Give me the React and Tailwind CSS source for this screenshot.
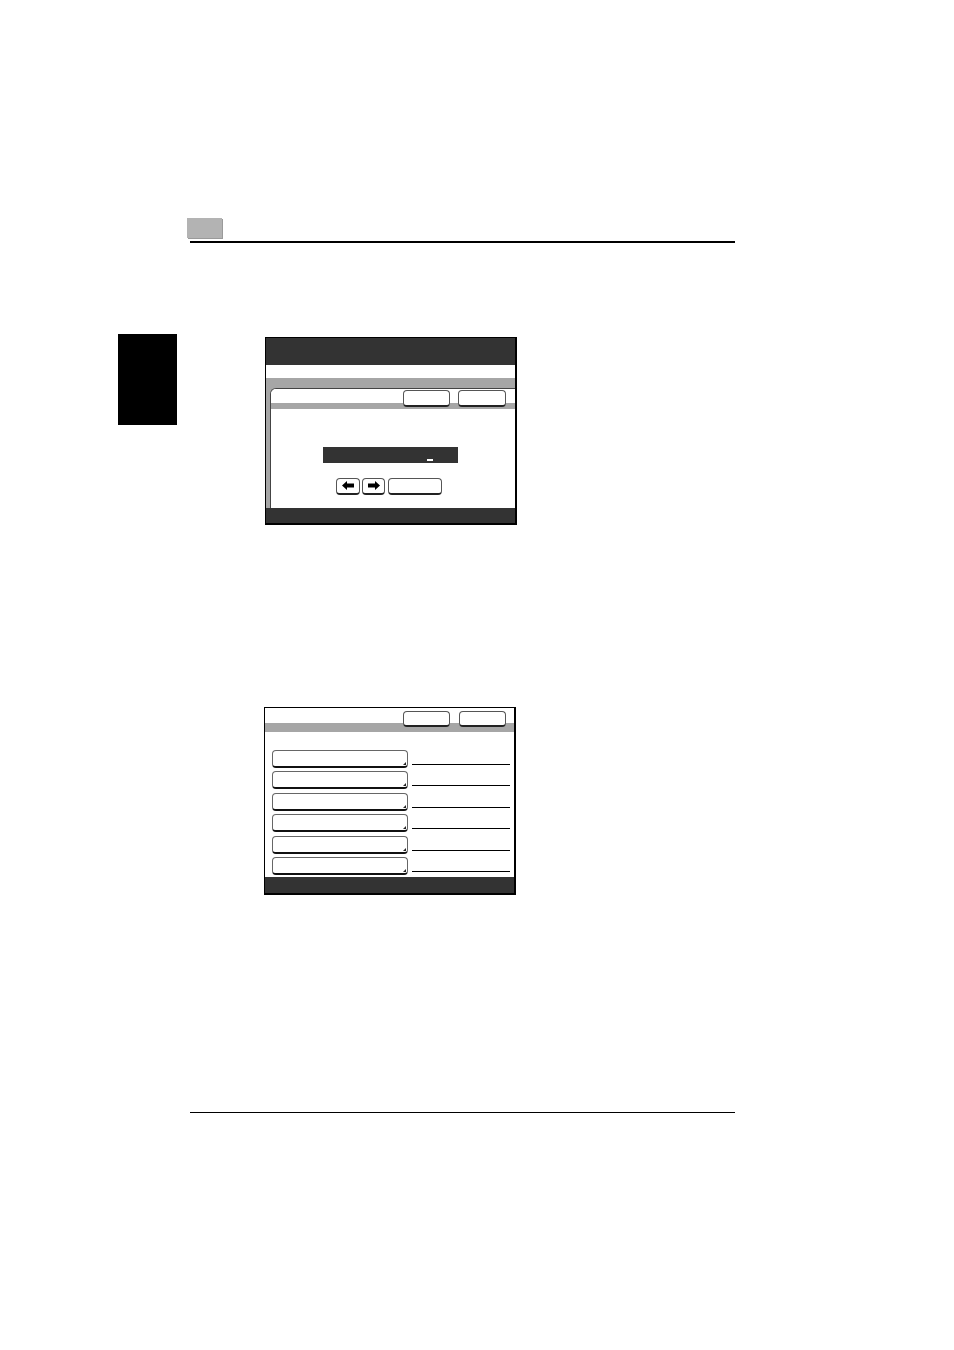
import React from "react";

// ============================================
// Small pieces
// ============================================
function KeyButton({ className = "", children }) {
  return (
    <div
      className={`flex items-center justify-center rounded-[4px] border border-[#555] border-b-2 border-b-[#222] bg-white ${className}`}
    >
      {children}
    </div>
  );
}

function ListButton() {
  return (
    <div className="relative h-[18px] w-[136px] rounded-[4px] border border-[#666] border-b-2 border-b-[#111] bg-white">
      {/* corner marker */}
      <svg className="absolute bottom-[1px] right-[1px]" width="3" height="3" viewBox="0 0 3 3">
        <path d="M3 0 L3 3 L0 3 Z" fill="#222" />
      </svg>
    </div>
  );
}

function Arrow({ dir }) {
  return (
    <svg width="12" height="9" viewBox="0 0 12 9">
      {dir === "left" ? (
        <path d="M0 4.5 L5 0 L5 2.5 L12 2.5 L12 6.5 L5 6.5 L5 9 Z" fill="#000" />
      ) : (
        <path d="M12 4.5 L7 0 L7 2.5 L0 2.5 L0 6.5 L7 6.5 L7 9 Z" fill="#000" />
      )}
    </svg>
  );
}

// ============================================
// Screen 1: text entry
// ============================================
function EntryScreen() {
  return (
    <div className="flex h-[188px] w-[252px] flex-col border-l border-t border-r-2 border-b-2 border-black bg-white">
      <div className="h-[27px] bg-[#333]" />
      <div className="h-[13px] bg-white" />
      <div className="h-[10px] bg-[#a6a6a6]" />
      <div className="flex flex-1 bg-[#a6a6a6]">
        <div className="w-[4px]" />
        <div className="flex flex-1 flex-col rounded-tl-[6px] border-l border-t border-[#444] bg-white">
          <div className="flex h-[20px] items-start justify-end gap-[8px] rounded-tl-[5px] bg-[linear-gradient(to_bottom,white_14px,#a6a6a6_14px)] pr-[9px] pt-[1px]">
            <KeyButton className="h-[17px] w-[47px]" />
            <KeyButton className="h-[17px] w-[48px]" />
          </div>
          <div className="ml-[52px] mt-[38px] flex h-[16px] w-[135px] items-end bg-[#333] pb-[2px]">
            <span className="ml-[104px] h-[2px] w-[6px] bg-white" />
          </div>
          <div className="ml-[65px] mt-[15px] flex items-center">
            <KeyButton className="h-[17px] w-[24px]">
              <Arrow dir="left" />
            </KeyButton>
            <KeyButton className="ml-[2px] h-[17px] w-[23px]">
              <Arrow dir="right" />
            </KeyButton>
            <KeyButton className="ml-[3px] h-[17px] w-[54px]" />
          </div>
        </div>
      </div>
      <div className="h-[15px] bg-[#333]" />
    </div>
  );
}

// ============================================
// Screen 2: list of entries
// ============================================
function ListScreen() {
  const rows = [0, 1, 2, 3, 4, 5];
  return (
    <div className="flex h-[188px] w-[252px] flex-col border-l border-t border-r-2 border-b-2 border-black bg-white">
      <div className="flex h-[24px] items-start justify-end gap-[9px] bg-[linear-gradient(to_bottom,white_15px,#a6a6a6_15px)] pr-[8px] pt-[3px]">
        <KeyButton className="h-[16px] w-[47px]" />
        <KeyButton className="h-[16px] w-[47px]" />
      </div>
      <div className="ml-[7px] mt-[18px] flex flex-col gap-[3.6px]">
        {rows.map((r) => (
          <div key={r} className="flex items-end">
            <ListButton />
            <div className="mb-[3px] ml-[4px] h-px w-[98px] bg-black" />
          </div>
        ))}
      </div>
      <div className="mt-auto h-[16px] bg-[#333]" />
    </div>
  );
}

export default function App() {
  return (
    <div className="h-[1350px] w-[954px] bg-white font-['Liberation_Sans',sans-serif]">
      {/* page header */}
      <div className="pt-[218px]">
        <div className="ml-[187px] h-[20px] w-[35px] bg-[#b3b3b3] shadow-[1px_1px_0_#9a9a9a]" />
        <div className="ml-[190px] mt-[3px] h-[1.5px] w-[545px] bg-black" />
      </div>

      {/* first figure with side tab */}
      <div className="mt-[91px] flex items-start">
        <div className="ml-[118px] h-[91px] w-[59px] bg-black" />
        <div className="ml-[88px] mt-[3px]">
          <EntryScreen />
        </div>
      </div>

      {/* second figure */}
      <div className="ml-[264px] mt-[182px]">
        <ListScreen />
      </div>

      {/* page footer rule */}
      <div className="ml-[190px] mt-[217px] h-[1.5px] w-[545px] bg-black" />
    </div>
  );
}
